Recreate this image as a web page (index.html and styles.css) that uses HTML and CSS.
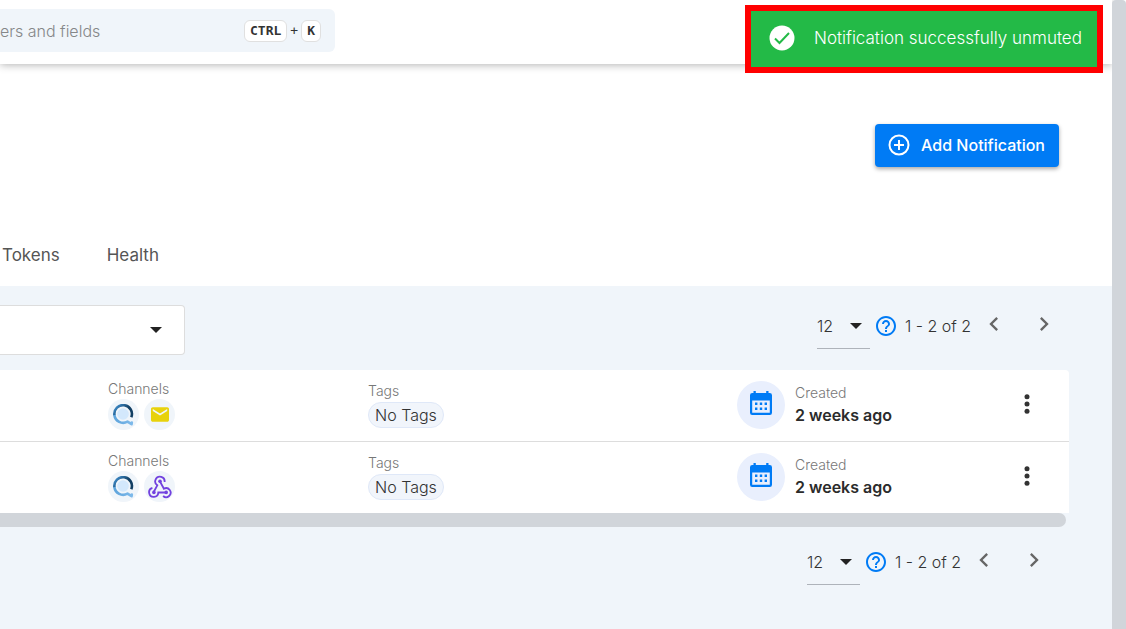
FILE: index.html
```html
<!DOCTYPE html>
<html lang="en">
<head>
<meta charset="utf-8">
<meta name="viewport" content="width=device-width, initial-scale=1">
<title>Notifications</title>
<link rel="stylesheet" href="styles.css">
</head>
<body>
<svg class="sprite" aria-hidden="true">
  <defs>
    <linearGradient id="arc-dark" x1="0" y1="0" x2="1" y2="0.6"><stop offset="0" stop-color="#4596d8"/><stop offset="0.7" stop-color="#123f63"/></linearGradient>
    <linearGradient id="arc-light" x1="0" y1="0" x2="1" y2="0"><stop offset="0" stop-color="#5ea4dc"/><stop offset="1" stop-color="#7db9ea"/></linearGradient>
  </defs>
  <symbol id="caret" viewBox="0 0 12 6"><path d="M0 0h12L6 6z"/></symbol>
  <symbol id="help" viewBox="2 2 20 20"><path d="M11 18h2v-2h-2v2zm1-16C6.480 2 2 6.480 2 12s4.480 10 10 10 10-4.480 10-10S17.520 2 12 2zm0 18c-4.410 0-8-3.590-8-8s3.590-8 8-8 8 3.590 8 8-3.590 8-8 8zm0-14c-2.210 0-4 1.790-4 4h2c0-1.100.9-2 2-2s2 .9 2 2c0 2-3 1.750-3 5h2c0-2.250 3-2.500 3-5 0-2.210-1.790-4-4-4z"/></symbol>
  <symbol id="prev" viewBox="0 0 24 24"><path d="M15.410 7.410 14 6l-6 6 6 6 1.410-1.410L10.830 12z"/></symbol>
  <symbol id="next" viewBox="0 0 24 24"><path d="M10 6 8.590 7.410 13.170 12l-4.580 4.590L10 18l6-6z"/></symbol>
  <symbol id="more" viewBox="0 0 24 24"><circle cx="12" cy="4.700" r="2.500"/><circle cx="12" cy="12" r="2.500"/><circle cx="12" cy="19.300" r="2.500"/></symbol>
  <symbol id="calendar" viewBox="0 0 24 26"><path fill-rule="evenodd" d="M4.500 1h2.300v2h10.400V1h2.300v2h1.200Q23 3 23 5.200v17.600q0 2.200-2.200 2.200H3.200Q1 25 1 22.800V5.200Q1 3 3.300 3h1.200zM3.200 10.500v12.300h17.600V10.500zM6 12.500h2.400v2.400H6zm4.800 0h2.400v2.400h-2.400zm4.800 0H18v2.400h-2.400zM6 17.500h2.400v2.400H6zm4.800 0h2.400v2.400h-2.400zm4.800 0H18v2.400h-2.400z"/></symbol>
  <symbol id="quest" viewBox="0 0 22 22"><circle cx="10" cy="10" r="5.800" fill="#d3e8fc"/><path d="M1.400 11A8.800 8.800 0 0 0 14.500 17.600L18.600 20.200 18.800 18.600" fill="none" stroke="url(#arc-light)" stroke-width="2.600" stroke-linejoin="round" stroke-linecap="round"/><path d="M1.400 11A8.800 8.800 0 1 1 18.300 13.200" fill="none" stroke="url(#arc-dark)" stroke-width="2.600"/></symbol>
  <symbol id="mail" viewBox="2 4 20 16"><path d="M20 4H4c-1.100 0-2 .9-2 2v12c0 1.100.9 2 2 2h16c1.100 0 2-.9 2-2V6c0-1.100-.9-2-2-2zm0 4-8 5-8-5V6l8 5 8-5z"/></symbol>
  <symbol id="webhook" viewBox="0 0 24 24"><g fill="none" stroke="currentColor" stroke-width="1.800"><path d="M16.600 7A4.700 4.700 0 1 0 9.300 10.300L6 16.500"/><path d="m12 6.500 3.900 7.200a4.500 4.500 0 1 1-.8 7.300"/><path d="M4.400 12.900A4.600 4.600 0 1 0 10.300 17.500H18"/></g><g fill="currentColor"><circle cx="12" cy="6.300" r="1.800"/><circle cx="5.900" cy="17.400" r="1.800"/><circle cx="18.200" cy="17.400" r="1.800"/></g></symbol>
</svg>

<div class="app">
  <header class="topbar">
    <label class="search">
      <input class="search-input" type="search" placeholder="ers and fields" aria-label="Search filters and fields">
      <span class="keys"><kbd>CTRL</kbd><span class="plus">+</span><kbd>K</kbd></span>
    </label>
  </header>

  <main>
    <div class="actions">
      <button class="add" type="button">
        <svg viewBox="0 0 22 22" aria-hidden="true"><circle cx="11" cy="11" r="9.500"/><path d="M11 6v10M6 11h10"/></svg>
        Add Notification
      </button>
    </div>
    <nav class="tabs">
      <a href="#tokens">Tokens</a>
      <a href="#health">Health</a>
    </nav>

    <section class="panel">
      <div class="toolbar">
        <div class="filter">
          <select aria-label="Filter"><option></option></select>
          <svg class="caret"><use href="#caret"/></svg>
        </div>
        <div class="pager">
          <div class="page-size">
            <select aria-label="Rows per page"><option>12</option></select>
            <svg class="caret"><use href="#caret"/></svg>
          </div>
          <svg class="help"><use href="#help"/></svg>
          <span class="range">1 - 2 of 2</span>
          <button class="step" type="button" aria-label="Previous page"><svg><use href="#prev"/></svg></button>
          <button class="step" type="button" aria-label="Next page"><svg><use href="#next"/></svg></button>
        </div>
      </div>

      <div class="list">
        <article class="row">
          <div class="channels">
            <span class="label">Channels</span>
            <div class="badges">
              <span class="badge"><svg class="quest"><use href="#quest"/></svg></span>
              <span class="badge"><svg class="mail"><use href="#mail"/></svg></span>
            </div>
          </div>
          <div class="tags"><span class="label">Tags</span><span class="tag">No Tags</span></div>
          <div class="created">
            <span class="date-icon"><svg><use href="#calendar"/></svg></span>
            <div class="date"><span class="label">Created</span><strong>2 weeks ago</strong></div>
          </div>
          <button class="more" type="button" aria-label="More actions"><svg><use href="#more"/></svg></button>
        </article>
        <article class="row">
          <div class="channels">
            <span class="label">Channels</span>
            <div class="badges">
              <span class="badge"><svg class="quest"><use href="#quest"/></svg></span>
              <span class="badge"><svg class="webhook"><use href="#webhook"/></svg></span>
            </div>
          </div>
          <div class="tags"><span class="label">Tags</span><span class="tag">No Tags</span></div>
          <div class="created">
            <span class="date-icon"><svg><use href="#calendar"/></svg></span>
            <div class="date"><span class="label">Created</span><strong>2 weeks ago</strong></div>
          </div>
          <button class="more" type="button" aria-label="More actions"><svg><use href="#more"/></svg></button>
        </article>
      </div>
      <div class="scroll-x"></div>

      <div class="pager pager-bottom">
        <div class="page-size">
          <select aria-label="Rows per page, bottom"><option>12</option></select>
          <svg class="caret"><use href="#caret"/></svg>
        </div>
        <svg class="help"><use href="#help"/></svg>
        <span class="range">1 - 2 of 2</span>
        <button class="step" type="button" aria-label="Previous page"><svg><use href="#prev"/></svg></button>
        <button class="step" type="button" aria-label="Next page"><svg><use href="#next"/></svg></button>
      </div>
    </section>
  </main>
</div>
<div class="scroll-y"></div>

<div class="toast" role="status">
  <svg viewBox="0 0 26 26" aria-hidden="true"><circle cx="13" cy="13" r="12.500"/><path d="m6 13.500 4.500 4.500L20 8"/></svg>
  <span>Notification successfully unmuted</span>
</div>
</body>
</html>
```

FILE: styles.css
```css
* { box-sizing: border-box; }

body {
  margin: 0;
  min-height: 100vh;
  display: flex;
  position: relative;
  background: #fff;
  color: #333;
  font: 300 16px/24px Inter, "Noto Sans", sans-serif;
}

svg { display: block; flex: none; fill: currentColor; }
button, select, input { font: inherit; color: inherit; }
button { border: 0; padding: 0; background: none; cursor: pointer; }
select { appearance: none; border: 0; border-radius: 0; background: none; }

.sprite { position: absolute; width: 0; height: 0; }

.app { flex: 1; min-width: 0; display: flex; flex-direction: column; }
.scroll-y { width: 14px; background: #d1d5da; border-radius: 4px 4px 0 0; }

.topbar {
  height: 64px;
  padding-top: 9px;
  box-shadow: 0 1px 8px rgba(0, 0, 0, 0.3);
}
.search {
  display: flex;
  align-items: center;
  width: 335px;
  max-width: 100%;
  height: 43px;
  padding-right: 14px;
  border-radius: 0 6px 6px 0;
  background: #f0f5fa;
}
.search-input {
  flex: 1;
  min-width: 0;
  padding: 0;
  border: 0;
  outline: 0;
  background: none;
}
.search-input::placeholder { color: #858789; opacity: 1; }
.keys { display: flex; align-items: center; gap: 3px; }
kbd {
  padding: 0 5px;
  border: 1px solid #e0e0e0;
  border-radius: 6px;
  background: #fff;
  font: 700 13px/20px "DejaVu Sans Mono", monospace;
}
.plus { font: 400 13px/20px "DejaVu Sans Mono", monospace; }

main { flex: 1; display: flex; flex-direction: column; }
.actions { display: flex; justify-content: flex-end; padding: 60px 53px 0 0; }
.add {
  display: flex;
  align-items: center;
  gap: 11px;
  height: 43px;
  padding: 0 14px 1px 13px;
  border-radius: 4px;
  background: #007bf5;
  color: #fff;
  font-weight: 500;
  box-shadow: 0 2px 4px rgba(0, 0, 0, 0.35);
}
.add svg { width: 22px; height: 22px; fill: none; stroke: #fff; stroke-width: 2; }

.tabs { display: flex; gap: 47px; padding: 76px 2px 19px; }
.tabs a { color: #555; font-size: 17px; font-weight: 400; text-decoration: none; }

.panel { flex: 1; padding: 19px 43px 24px 0; background: #f0f5fa; }
.toolbar { display: flex; justify-content: space-between; height: 65px; }

.filter, .page-size { display: grid; align-items: center; }
.filter select, .filter .caret, .page-size select, .page-size .caret { grid-area: 1 / 1; }
.caret { justify-self: end; width: 12px; height: 6px; color: #222; pointer-events: none; }
.filter { width: 185px; height: 50px; }
.filter select {
  width: 100%;
  height: 50px;
  border: 1px solid #ddd;
  border-left: 0;
  border-radius: 0 4px 4px 0;
  background: #fff;
}
.filter .caret { margin-right: 23px; }

.pager { display: flex; align-items: center; height: 42px; }
.page-size { width: 53px; }
.page-size select {
  width: 100%;
  height: 46px;
  padding: 0;
  border-bottom: 1px solid #aeb3ba;
}
.page-size .caret { margin-right: 8px; }
.help { width: 20px; height: 20px; margin: 0 9px 0 6px; color: #007bf5; }
.range { width: 64px; white-space: nowrap; }
.step { width: 50px; color: #666; }
.step svg { width: 28px; height: 28px; margin: 0 auto 4px; }

.list { background: #fff; border-radius: 0 4px 0 0; }
.row {
  display: grid;
  grid-template-columns: 260fr 369fr 265fr 67px;
  align-items: center;
  height: 71px;
  padding: 0 0 2px 108px;
}
.row + .row { height: 72px; border-top: 1px solid #ddd; }
.label { display: block; color: #777; font-size: 14px; line-height: 20px; }
.badges { display: flex; gap: 5px; }
.badge {
  display: grid;
  place-items: center;
  width: 31px;
  height: 31px;
  border-radius: 50%;
  background: #f0f5fa;
}
.quest { width: 22px; height: 22px; }
.mail { width: 18px; height: 15px; color: #e8d20c; }
.webhook { width: 24px; height: 24px; color: #7242df; }
.tags .label { padding-bottom: 2px; line-height: 18px; }
.tag {
  display: inline-block;
  padding: 0 6px;
  border: 1px solid #dfe8f8;
  border-radius: 13px;
  background: #f1f5fb;
  vertical-align: top;
}
.created { display: flex; align-items: center; gap: 10px; }
.date-icon {
  display: grid;
  place-items: center;
  width: 48px;
  height: 48px;
  border-radius: 50%;
  background: #e9effd;
  color: #007bf5;
}
.date-icon svg { width: 24px; height: 26px; margin-bottom: 3px; }
.date strong { display: block; font-weight: 600; color: #2b2b2b; }
.more { display: grid; justify-content: start; padding-left: 13px; }
.more svg { width: 24px; height: 24px; margin-bottom: 2px; }

.scroll-x { height: 14px; margin-right: 3px; border-radius: 0 7px 7px 0; background: #d1d5da; }
.pager-bottom { justify-content: flex-end; margin-top: 14px; padding-right: 10px; }

.toast {
  position: absolute;
  top: 5px;
  right: 23px;
  display: flex;
  align-items: center;
  gap: 19px;
  min-width: 358px;
  height: 68px;
  padding: 0 10px 3px 18px;
  border: 6px solid #f00;
  background: #23ba47;
  color: #fff;
  font-size: 17px;
  font-weight: 300;
}
.toast svg { width: 26px; height: 26px; }
.toast svg path { fill: none; stroke: #23ba47; stroke-width: 2; }
```
